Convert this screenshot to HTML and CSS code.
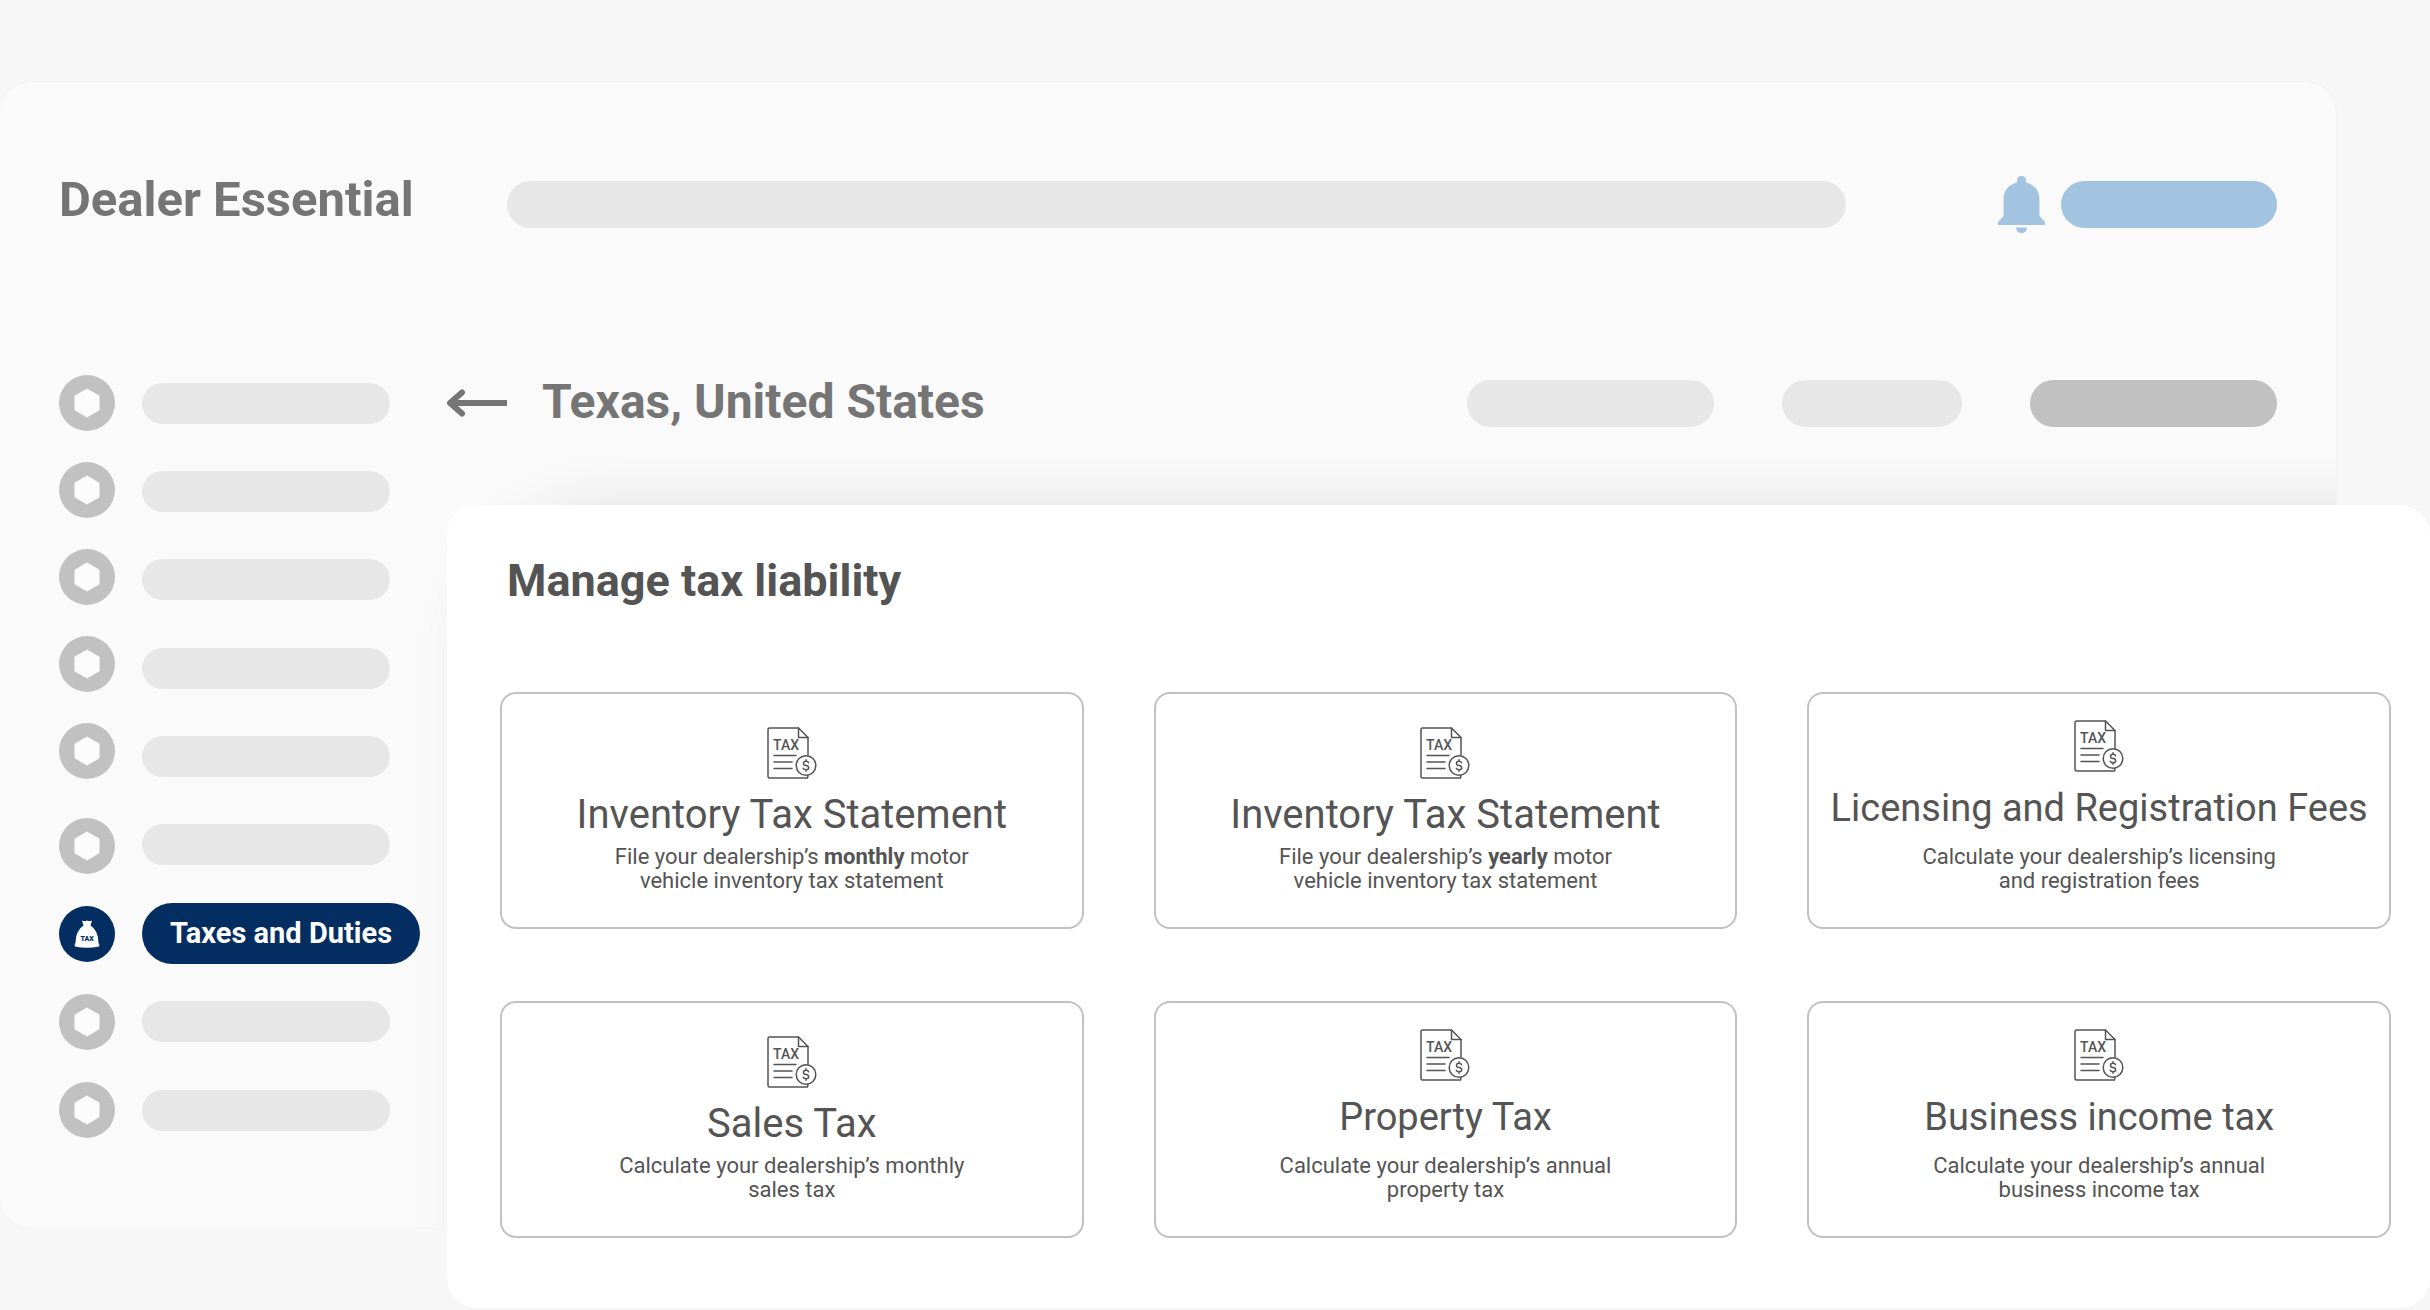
FILE: index.html
```html
<!DOCTYPE html>
<html lang="en">
<head>
    <meta charset="utf-8">
    <title>Dealer Essential</title>
    <link rel="stylesheet" href="styles.css">
</head>
<body>
    <!-- shared icons -->
    <svg class="sprite" aria-hidden="true">
        <symbol id="hex" viewBox="0 0 56 56">
            <circle cx="28" cy="28" r="28" fill="#c1c1c1"/>
            <path d="M28 13.500l12.500 7.200v14.600L28 42.500l-12.500-7.200V20.700z" fill="#fcfcfc"/>
        </symbol>
        <symbol id="tax-doc" viewBox="0 0 50 52">
            <g fill="none" stroke="#545454" stroke-width="1.500" stroke-linejoin="round" stroke-linecap="round">
                <path d="M41 28V10.500L31.500 1H2.500Q1 1 1 2.500V49.500Q1 51 2.500 51H40.500L41 48.500"/>
                <path d="M31.500 1V10.500H41"/>
                <path d="M7 28.500H29M7 35H25M7 41.500H25"/>
                <circle cx="39" cy="38.500" r="9.800"/>
                <path d="M41.600 35.800Q41 34.300 39 34.300Q36.500 34.300 36.500 36.400Q36.500 38.200 39 38.500Q41.700 38.900 41.700 40.800Q41.700 42.800 39 42.800Q36.800 42.800 36.300 41.200M39 32.800V34.300M39 42.800V44.300"/>
            </g>
            <text x="6" y="23" class="doc-text">TAX</text>
        </symbol>
    </svg>

    <div class="stage">
        <div class="backdrop"></div>

        <header class="topbar">
            <h1 class="brand">Dealer Essential</h1>
            <div class="bone search"></div>
            <button class="icon-btn bell" aria-label="Notifications">
                <svg width="47" height="57" viewBox="0 0 47 57" fill="#a2c4e0">
                    <path d="M19 6.500V5Q19 0 23.500 0Q28 0 28 5V6.500Q41.500 10 41.500 24V40L47 46V49H0V46L5.500 40V24Q5.500 10 19 6.500z"/>
                    <path d="M18 51.500H29Q28.500 57 23.500 57Q18.500 57 18 51.500z"/>
                </svg>
            </button>
            <div class="bone account"></div>
        </header>

        <nav class="sidebar">
            <div class="nav-icons">
                <div class="icon-group">
                    <svg><use href="#hex"/></svg>
                    <svg><use href="#hex"/></svg>
                    <svg><use href="#hex"/></svg>
                    <svg><use href="#hex"/></svg>
                    <svg><use href="#hex"/></svg>
                </div>
                <div class="icon-group">
                    <svg><use href="#hex"/></svg>
                    <svg viewBox="0 0 56 56">
                        <circle cx="28" cy="28" r="28" fill="#042d62"/>
                        <path d="M23 14.500Q25.500 15.500 28 14.500Q30.500 15.500 33 14.500L31.500 19.500Q39.500 24.500 39.500 37Q41 38 40 40.500Q34 41.800 28 41.800T16 40.500Q15 38 16.500 37Q16.500 24.500 24.500 19.500z" fill="#fff"/>
                        <text x="28" y="35" text-anchor="middle" class="bag-text">TAX</text>
                    </svg>
                    <svg><use href="#hex"/></svg>
                    <svg><use href="#hex"/></svg>
                </div>
            </div>
            <ul class="nav-labels">
                <li><span class="bone"></span></li>
                <li><span class="bone"></span></li>
                <li><span class="bone"></span></li>
                <li><span class="bone"></span></li>
                <li><span class="bone"></span></li>
                <li><span class="bone"></span></li>
                <li><a class="nav-active" href="#">Taxes and Duties</a></li>
                <li><span class="bone"></span></li>
                <li><span class="bone"></span></li>
            </ul>
        </nav>

        <div class="location">
            <button class="icon-btn" aria-label="Back">
                <svg width="60" height="28" viewBox="0 0 60 28" fill="none" stroke="#757575" stroke-width="6">
                    <path d="M60 14H4"/>
                    <path d="M15 3.500L3 14L15 24.500" stroke-linecap="round" stroke-linejoin="round"/>
                </svg>
            </button>
            <h2 class="place">Texas, United States</h2>
            <div class="filters">
                <span class="bone"></span>
                <span class="bone short"></span>
                <span class="bone dark"></span>
            </div>
        </div>

        <main class="panel">
            <h2 class="panel-title">Manage tax liability</h2>
            <div class="cards">
                <a class="card" href="#">
                    <svg class="card-icon"><use href="#tax-doc"/></svg>
                    <h3>Inventory Tax Statement</h3>
                    <p>File your dealership’s <b>monthly</b> motor<br>vehicle inventory tax statement</p>
                </a>
                <a class="card" href="#">
                    <svg class="card-icon"><use href="#tax-doc"/></svg>
                    <h3>Inventory Tax Statement</h3>
                    <p>File your dealership’s <b>yearly</b> motor<br>vehicle inventory tax statement</p>
                </a>
                <a class="card raised" href="#">
                    <svg class="card-icon"><use href="#tax-doc"/></svg>
                    <h3>Licensing and Registration Fees</h3>
                    <p>Calculate your dealership’s licensing<br>and registration fees</p>
                </a>
                <a class="card" href="#">
                    <svg class="card-icon"><use href="#tax-doc"/></svg>
                    <h3>Sales Tax</h3>
                    <p>Calculate your dealership’s monthly<br>sales tax</p>
                </a>
                <a class="card raised" href="#">
                    <svg class="card-icon"><use href="#tax-doc"/></svg>
                    <h3>Property Tax</h3>
                    <p>Calculate your dealership’s annual<br>property tax</p>
                </a>
                <a class="card raised" href="#">
                    <svg class="card-icon"><use href="#tax-doc"/></svg>
                    <h3>Business income tax</h3>
                    <p>Calculate your dealership’s annual<br>business income tax</p>
                </a>
            </div>
        </main>
    </div>
</body>
</html>
```

FILE: styles.css
```css
* {
    box-sizing: border-box;
}

body {
    margin: 0;
    padding: 82px 0 2px;
    background: #f7f7f7;
    color: #545454;
    font-family: Roboto, sans-serif;
}

h1, h2, h3, p, ul {
    margin: 0;
    padding: 0;
}

a {
    color: inherit;
    text-decoration: none;
}

.sprite {
    display: none;
}

/* the white panel overlaps the faded app window, both share one grid */
.stage {
    display: grid;
    grid-template-columns: 447px 1fr 94px;
    grid-template-rows: auto auto auto 80px;
}

.backdrop {
    grid-area: 1 / 1 / 4 / 3;
    position: relative;
    overflow: hidden;
    background: #fafafa;
    border-radius: 30px;
    box-shadow: 0 0 1px #e0e0e0;
}

/* panel shadow, only falls on the window */
.backdrop::after {
    content: "";
    position: absolute;
    top: 416px;
    left: 464px;
    right: -200px;
    bottom: -200px;
    border-radius: 150px;
    background: rgba(0, 0, 0, 0.08);
    filter: blur(26px);
}

.topbar {
    grid-area: 1 / 1 / 2 / 3;
    position: relative;
    display: flex;
    align-items: center;
    padding: 90px 59px 139px;
}

.brand {
    flex: 0 0 448px;
    padding-bottom: 8px;
    font-size: 49px;
    line-height: 56px;
    color: #757575;
}

.bone {
    display: block;
    height: 47px;
    border-radius: 24px;
    background: #e7e7e7;
}

.search {
    flex: 1;
}

.account {
    width: 216px;
    background: #a2c4e0;
}

.icon-btn {
    display: flex;
    padding: 0;
    border: none;
    background: none;
    cursor: pointer;
}

.bell {
    margin: 0 16px 0 152px;
}

.sidebar {
    grid-area: 2 / 1 / 4 / 2;
    position: relative;
    display: flex;
    align-self: start;
    gap: 27px;
    padding-left: 59px;
}

.nav-icons {
    display: flex;
    flex-direction: column;
    gap: 39px;
}

.icon-group {
    display: flex;
    flex-direction: column;
    gap: 32px;
}

.icon-group:first-child {
    gap: 31px;
}

.icon-group svg {
    display: block;
    width: 56px;
    height: 56px;
}

.bag-text {
    font-size: 7px;
    font-weight: 900;
    fill: #042d62;
}

.nav-labels {
    display: flex;
    flex-direction: column;
    justify-content: space-between;
    list-style: none;
}

.nav-labels li {
    display: flex;
    align-items: center;
    height: 56px;
}

.nav-labels .bone {
    width: 248px;
    height: 41px;
}

.nav-active {
    flex: none;
    padding: 0 28px;
    border-radius: 31px;
    background: #042d62;
    color: #fff;
    font-size: 29px;
    font-weight: bold;
    line-height: 61px;
}

.location {
    grid-area: 2 / 2 / 3 / 3;
    position: relative;
    display: flex;
    align-items: center;
    padding: 0 59px 74px 0;
}

.place {
    margin-left: 35px;
    padding-bottom: 2px;
    font-size: 48px;
    line-height: 54px;
    color: #757575;
}

.filters {
    display: flex;
    gap: 68px;
    margin-left: auto;
}

.filters .bone {
    width: 247px;
}

.filters .short {
    width: 180px;
}

.filters .dark {
    background: #c1c1c1;
}

.panel {
    grid-area: 3 / 2 / 5 / 4;
    position: relative;
    padding: 48px 39px 70px 53px;
    border-radius: 30px;
    background: #fff;
}

.panel-title {
    margin: 0 0 83px 7px;
    font-size: 45px;
    line-height: 56px;
}

.cards {
    display: grid;
    grid-template-columns: repeat(3, 1fr);
    gap: 72px 70px;
}

.card {
    display: flex;
    flex-direction: column;
    align-items: center;
    min-height: 237px;
    padding-top: 33px;
    border: 2px solid #c1c1c1;
    border-radius: 16px;
    text-align: center;
}

.card-icon {
    width: 50px;
    height: 52px;
    margin-bottom: 12px;
}

.doc-text {
    font-size: 14px;
    font-weight: 500;
    fill: #545454;
}

.card h3 {
    margin-bottom: 6px;
    font-size: 40px;
    font-weight: normal;
    line-height: 48px;
}

.card p {
    font-size: 22px;
    line-height: 24px;
}

.card.raised {
    padding-top: 26px;
}

.card.raised h3 {
    margin-bottom: 13px;
    font-size: 38px;
}
```
